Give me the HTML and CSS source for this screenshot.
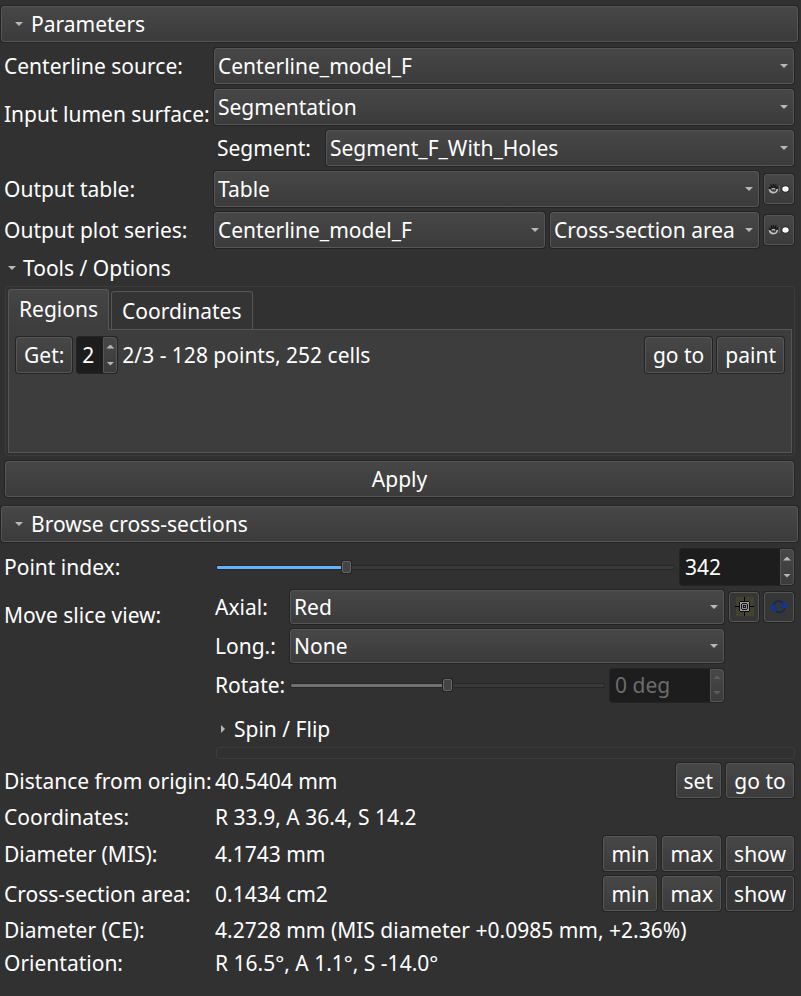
FILE: index.html
```html
<!DOCTYPE html>
<html lang="en">
<head>
<meta charset="utf-8">
<title>Cross-section analysis</title>
<link rel="stylesheet" href="styles.css">
</head>
<body>
<svg class="defs" aria-hidden="true">
  <symbol id="eye" viewBox="0 0 22 12">
    <path d="M1 4 L3 5.5 M2.8 1.5 L4.2 4 M5.5 1 V3.5 M8.2 1.5 L7 4 M10 3.6 L8.4 5" stroke="#141414" stroke-width="1.4"/>
    <path d="M1.4 6.2 Q2.2 9.6 5.4 9.6 Q9 9.6 9.2 6" stroke="#c4c4c4" stroke-width="1.6" fill="none"/>
    <path d="M1.6 6 Q5 3 9 5.6" stroke="#1c1c1c" stroke-width="1.4" fill="none"/>
    <path d="M3.8 6.2 Q5.4 4.8 7 6.2" stroke="#ccc" stroke-width="1.2" fill="none"/>
    <path d="M11.5 3 V9" stroke="#666"/>
    <ellipse cx="17.5" cy="6" rx="4" ry="3.6" fill="#222"/>
    <ellipse cx="17.5" cy="6" rx="3.2" ry="2.8" fill="#fff"/>
  </symbol>
</svg>
<main>
  <button class="section" type="button" aria-expanded="true"><i class="tri"></i>Parameters</button>
  <div class="form params">
    <label for="source">Centerline source:</label>
    <div class="line"><span class="combo grow"><select id="source"><option>Centerline_model_F</option></select></span></div>
    <label class="upper" for="surface">Input lumen surface:</label>
    <div class="stack">
      <div class="line"><span class="combo grow"><select id="surface"><option>Segmentation</option></select></span></div>
      <div class="line"><label class="segment" for="segment">Segment:</label><span class="combo grow"><select id="segment"><option>Segment_F_With_Holes</option></select></span></div>
    </div>
    <label for="table">Output table:</label>
    <div class="line"><span class="combo grow"><select id="table"><option>Table</option></select></span><button class="tool" type="button" aria-label="Show table"><svg class="eye"><use href="#eye"/></svg></button></div>
    <label for="series">Output plot series:</label>
    <div class="line"><span class="combo grow"><select id="series"><option>Centerline_model_F</option></select></span><span class="combo"><select class="quantity" aria-label="Plotted quantity"><option>Cross-section area</option></select></span><button class="tool" type="button" aria-label="Show plot"><svg class="eye"><use href="#eye"/></svg></button></div>
  </div>

  <button class="toggle" type="button" aria-expanded="true"><i class="tri"></i>Tools / Options</button>
  <section class="frame">
    <div class="tabs" role="tablist">
      <button class="tab active" role="tab" aria-selected="true" type="button">Regions</button>
      <button class="tab" role="tab" aria-selected="false" type="button">Coordinates</button>
    </div>
    <div class="panel" role="tabpanel">
      <button class="btn" type="button">Get:</button>
      <span class="spin region"><input type="text" value="2" aria-label="Region"><span class="steps"><button type="button" aria-label="Increase"><i class="tri up"></i></button><button type="button" aria-label="Decrease"><i class="tri"></i></button></span></span>
      <span class="grow">2/3 - 128 points, 252 cells</span>
      <button class="btn" type="button">go to</button>
      <button class="btn" type="button">paint</button>
    </div>
  </section>
  <button class="btn apply" type="button">Apply</button>

  <button class="section" type="button" aria-expanded="true"><i class="tri"></i>Browse cross-sections</button>
  <div class="form browse">
    <label for="point">Point index:</label>
    <div class="line"><input class="slider main" id="point" type="range" min="0" max="1000" value="279"><span class="spin wide"><input type="text" value="342" aria-label="Point index value"><span class="steps"><button type="button" aria-label="Increase"><i class="tri up"></i></button><button type="button" aria-label="Decrease"><i class="tri"></i></button></span></span></div>
    <span class="upper">Move slice view:</span>
    <div class="slices">
      <label for="axial">Axial:</label>
      <span class="combo"><select id="axial"><option>Red</option></select></span>
      <button class="tool flat" type="button" aria-label="Centre view"><svg class="glyph" viewBox="0 0 20 20" shape-rendering="crispEdges"><path fill="#42422f" d="M2 0H20V19H2Z"/><path d="M10 0H11V5H10ZM10 15H11V19H10ZM1 9H6V10H1ZM15 9H20V10H15Z" fill="#000"/><path d="M6 4H15V5H16V14H15V15H6V14H5V5H6Z" fill="#080808"/><path d="M6 5H15V14H6Z" fill="#999"/><path d="M8 6H13V7H14V12H13V13H8V12H7V7H8Z" fill="#111"/><path d="M8 7H13V12H8Z" fill="#8c8c8c"/><path d="M9 8H12V11H9Z" fill="#111"/><path d="M10 9H11V10H10Z" fill="#999"/></svg></button>
      <button class="tool flat" type="button" aria-label="Refresh orientation"><svg class="glyph" viewBox="0 0 20 20"><path d="M4.5 8 Q6 4 10 4 Q12 4 14 6 M16 11 Q14.5 15 10.5 15.5 Q8 15.5 6.5 13.5" stroke="#172a55" stroke-width="2" fill="none"/><path d="M18 4.5 V11 H11.5 L13.5 9 L11.5 7.5 L14 6 L15.5 7 Z M2 8.5 H8.5 L6.8 10.5 L9 12.5 L6.5 13.5 L5 12.5 L2 15 Z" fill="#0c3797"/></svg></button>
      <label class="start" for="long">Long.:</label>
      <span class="combo"><select id="long"><option>None</option></select></span>
      <label class="start" for="rotate">Rotate:</label>
      <div class="line rotate"><input class="slider dim" id="rotate" type="range" min="-180" max="180" value="0"><span class="spin wide off"><input type="text" value="0 deg" aria-label="Rotation angle" disabled><span class="steps"><button type="button" aria-label="Increase" disabled><i class="tri up"></i></button><button type="button" aria-label="Decrease" disabled><i class="tri"></i></button></span></span></div>
    </div>
    <div class="flip">
      <button class="toggle" type="button" aria-expanded="false"><i class="tri right"></i>Spin / Flip</button>
      <div class="empty"></div>
    </div>
  </div>
  <div class="results">
    <span>Distance from origin:</span><div class="line tall"><output class="grow">40.5404 mm</output><button class="btn" type="button">set</button><button class="btn show" type="button">go to</button></div>
    <span>Coordinates:</span><div class="line">R 33.9, A 36.4, S 14.2</div>
    <span>Diameter (MIS):</span><div class="line tall"><output class="grow">4.1743 mm</output><button class="btn" type="button">min</button><button class="btn" type="button">max</button><button class="btn show" type="button">show</button></div>
    <span>Cross-section area:</span><div class="line tall"><output class="grow">0.1434 cm2</output><button class="btn" type="button">min</button><button class="btn" type="button">max</button><button class="btn show flat" type="button">show</button></div>
    <span>Diameter (CE):</span><div class="line">4.2728 mm (MIS diameter +0.0985 mm, +2.36%)</div>
    <span>Orientation:</span><div class="line">R 16.5°, A 1.1°, S -14.0°</div>
  </div>
</main>
</body>
</html>
```
FILE: styles.css
```css
:root {
  --bg: #313131;
  --edge: #565656;
  --dark: #242424;
  --face: linear-gradient(#474747, #3b3b3b);
}
* { box-sizing: border-box; }
body {
  margin: 0;
  background: var(--bg);
  color: #fff;
  font: 21px/28px "Noto Sans", sans-serif;
}
button, input, select { font: inherit; color: inherit; margin: 0; }
.defs { display: none; }
main { display: flex; flex-direction: column; padding-top: 6px; }

.section, .btn, .tool, select {
  background: var(--face);
  border: 1px solid var(--edge);
  border-radius: 3px;
  box-shadow: 0 0 0 1px var(--dark);
}
.section {
  display: flex;
  align-items: center;
  gap: 8px;
  height: 36px;
  margin: 0 3px 0 1px;
  padding: 0 13px;
}
.tri {
  flex: none;
  width: 8px;
  height: 4px;
  background: #b8b8b8;
  clip-path: polygon(0 0, 100% 0, 50% 100%);
}
.tri.up { clip-path: polygon(50% 0, 100% 100%, 0 100%); }
.tri.right { width: 4px; height: 8px; clip-path: polygon(0 0, 100% 50%, 0 100%); }

.form {
  display: grid;
  grid-template-columns: 210px 1fr;
  align-items: center;
  gap: 5px 0;
  padding: 6px 7px 0 4px;
}
.upper { align-self: start; padding-top: 11px; }
.stack { display: flex; flex-direction: column; gap: 5px; }
.line { display: flex; align-items: center; gap: 5px; }
.grow { flex: 1; }
.segment { width: 107px; padding-left: 3px; }
.combo { position: relative; display: flex; }
.combo::after {
  content: "";
  position: absolute;
  right: 6px;
  top: calc(50% - 2px);
  width: 8px;
  height: 4px;
  background: #b8b8b8;
  clip-path: polygon(0 0, 100% 0, 50% 100%);
  pointer-events: none;
}
select {
  appearance: none;
  width: 100%;
  height: 36px;
  padding: 0 3px;
}
.quantity { width: 209px; }
.tool {
  display: grid;
  place-items: center;
  width: 30px;
  height: 30px;
  padding: 0;
}
.tool.flat, .btn.flat { background: #363636; }
.eye { width: 22px; height: 12px; }
.glyph { width: 20px; height: 20px; }

.toggle {
  display: flex;
  align-items: center;
  gap: 7px;
  height: 38px;
  padding: 2px 8px 0;
  border: 0;
  background: none;
}
.frame {
  margin: 0 6px 0 5px;
  padding: 2px;
  border: 1px solid #3c3c3c;
  border-radius: 3px;
}
.tabs { display: flex; align-items: flex-end; gap: 2px; }
.tab {
  height: 38px;
  padding: 0 10px;
  border: 1px solid var(--edge);
  border-bottom: 0;
  border-radius: 3px 3px 0 0;
  background: #343434;
}
.tab.active {
  z-index: 1;
  height: 41px;
  margin-bottom: -1px;
  padding-bottom: 2px;
  background: linear-gradient(#454545, #3d3d3d);
}
.panel {
  display: flex;
  align-items: flex-start;
  gap: 5px;
  min-height: 124px;
  padding: 7px;
  border: 1px solid var(--edge);
  background: #3d3d3d;
  line-height: 36px;
}
.btn { height: 36px; padding: 0 7px; line-height: 28px; }
.apply { margin: 5px 7px 9px 5px; }

.spin {
  display: flex;
  height: 36px;
  border-radius: 3px;
  background: #1d1d1d;
  box-shadow: 0 0 0 1px var(--dark);
}
.spin input {
  flex: 1;
  min-width: 0;
  padding: 0 5px;
  border: 0;
  background: none;
}
.steps {
  display: flex;
  flex-direction: column;
  width: 14px;
  border: 1px solid var(--edge);
  border-radius: 0 3px 3px 0;
  background: var(--face);
}
.steps button {
  flex: 1;
  display: grid;
  place-items: center;
  padding: 0;
  border: 0;
  background: none;
}
.region { width: 40px; }
.wide { width: 114px; }
.off { height: 33px; color: #6c6c6c; }
.off .tri { background: #5c5c5c; }

.slider {
  flex: 1;
  min-width: 0;
  height: 16px;
  appearance: none;
  background: none;
}
.slider::-webkit-slider-runnable-track {
  height: 5px;
  border: 1px solid #272727;
  border-radius: 2px;
  background: #393939;
}
.slider.main { margin-left: 2px; }
.slider.main::-webkit-slider-runnable-track { background: linear-gradient(90deg, #64b2fb 28%, #393939 28%); }
.slider.dim::-webkit-slider-runnable-track { background: linear-gradient(90deg, #707070 50%, #393939 50%); }
.slider::-webkit-slider-thumb {
  appearance: none;
  width: 9px;
  height: 12px;
  margin-top: -5px;
  border: 1px solid #666;
  border-radius: 2px;
  background: #444;
  box-shadow: 0 0 0 1px var(--dark);
}
.browse { padding-top: 7px; }
.slices {
  display: grid;
  grid-template-columns: 70px 1fr 30px 30px;
  align-items: center;
  gap: 5px;
  padding-left: 1px;
}
.slices select { height: 34px; }
.start { grid-column: 1; }
.rotate { height: 34px; }
.flip { grid-column: 2; padding: 2px 0 0 2px; }
.flip .toggle { padding: 2px 5px 0; gap: 9px; }
.empty { height: 12px; border: 1px solid #3c3c3c; border-radius: 3px; margin-right: -1px; }

.results {
  display: grid;
  grid-template-columns: 211px 1fr;
  align-items: center;
  row-gap: 5px;
  padding: 4px 7px 0 4px;
}
.tall, .tall .btn { height: 35px; }
.btn.show { width: 68px; padding: 0; }
```
